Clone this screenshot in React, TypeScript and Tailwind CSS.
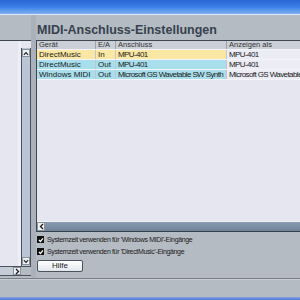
import React from "react";

const font = { fontFamily: '"Liberation Sans", Arial, sans-serif' };

function UpArrow() {
  return (
    <svg width="7" height="5" viewBox="0 0 7 5">
      <path d="M1 4 L3.5 1.5 L6 4" stroke="#1a1a1a" strokeWidth="1.3" fill="none" />
    </svg>
  );
}
function DownArrow() {
  return (
    <svg width="7" height="5" viewBox="0 0 7 5">
      <path d="M1 1 L3.5 3.5 L6 1" stroke="#1a1a1a" strokeWidth="1.3" fill="none" />
    </svg>
  );
}
function RightArrow() {
  return (
    <svg width="5" height="7" viewBox="0 0 5 7">
      <path d="M1 1 L3.5 3.5 L1 6" stroke="#1a1a1a" strokeWidth="1.3" fill="none" />
    </svg>
  );
}
function LeftArrow() {
  return (
    <svg width="5" height="7" viewBox="0 0 5 7">
      <path d="M4 1 L1.5 3.5 L4 6" stroke="#1a1a1a" strokeWidth="1.3" fill="none" />
    </svg>
  );
}

function Check() {
  return (
    <div className="w-[7px] h-[7px] bg-[#111] flex items-center justify-center shrink-0">
      <svg width="6" height="6" viewBox="0 0 6 6">
        <path d="M1 3 L2.4 4.5 L5 1.3" stroke="#fff" strokeWidth="1.2" fill="none" />
      </svg>
    </div>
  );
}

const rows = [
  { g: "DirectMusic", ea: "In", a: "MPU-401", z: "MPU-401", bg: "bg-[#fbe7a4]" },
  { g: "DirectMusic", ea: "Out", a: "MPU-401", z: "MPU-401", bg: "bg-[#a9dfec]" },
  { g: "Windows MIDI", ea: "Out", a: "Microsoft GS Wavetable SW Synth", z: "Microsoft GS Wavetable SW Synth", bg: "bg-[#a9dfec]" },
];

export default function App() {
  return (
    <div className="w-[300px] h-[300px] overflow-hidden bg-[#b5bbc3] flex flex-col text-[#1a1a1a]" style={font}>
      {/* title bar */}
      <div className="h-[14px] shrink-0 bg-gradient-to-b from-[#2a66d6] via-[#3a80e6] to-[#7fb0f2]" />
      <div className="h-[1px] shrink-0 bg-[#dfe8f4]" />

      {/* main */}
      <div className="h-[263px] shrink-0 flex">
        {/* left panel */}
        <div className="w-[31px] shrink-0 pt-[25px] flex flex-col">
          <div className="h-[236px] flex flex-col border-t border-[#3e4650]">
            <div className="flex-1 flex">
              <div className="w-[21px] bg-[#e6e6f0] border-r-[3px] border-[#eeeef6]" />
              <div className="w-[10px] flex flex-col">
                <div className="h-[7px] bg-[#e6e6f0]" />
                <div className="flex-1 flex flex-col bg-[#bac6d6] border-x border-[#4a525c]">
                  <div className="h-[8px] mt-[1px] bg-[#eef0f4] border border-[#8a929c] flex items-center justify-center">
                    <UpArrow />
                  </div>
                  <div className="flex-1" />
                  <div className="h-[8px] mb-[1px] bg-[#eef0f4] border border-[#8a929c] flex items-center justify-center">
                    <DownArrow />
                  </div>
                </div>
              </div>
            </div>
            <div className="h-[10px] shrink-0 flex border-y border-[#4a525c]">
              <div className="w-[21px] bg-[#c4ccd8] flex justify-end">
                <div className="w-[8px] h-full bg-[#eef0f4] border border-[#8a929c] flex items-center justify-center">
                  <RightArrow />
                </div>
              </div>
              <div className="w-[10px] bg-[#b5bbc3]" />
            </div>
          </div>
        </div>

        {/* splitter */}
        <div className="w-[5px] shrink-0 bg-[#aab1ba]" />

        {/* right panel */}
        <div className="flex-1 min-w-0 flex flex-col">
          <div className="h-[25px] shrink-0 flex items-end pb-[4px] pl-[1px]">
            <span className="text-[12.5px] font-bold leading-none text-[#36424e] whitespace-nowrap">
              MIDI-Anschluss-Einstellungen
            </span>
          </div>
          <div className="h-[192px] shrink-0 border-t border-l border-[#3e4650] flex flex-col">
            <div className="flex-1 bg-[#e6e6f0] flex flex-col overflow-hidden">
              {/* header */}
              <div className="h-[8px] flex bg-[#cbd0d8] text-[7.5px] leading-[8px] text-[#333] whitespace-nowrap">
                <div className="w-[59px] pl-[2px] border-r border-[#9aa3ae]">Gerät</div>
                <div className="w-[20px] pl-[2px] border-r border-[#9aa3ae]">E/A</div>
                <div className="w-[111px] pl-[2px] border-r border-[#9aa3ae]">Anschluss</div>
                <div className="flex-1 pl-[2px]">Anzeigen als</div>
              </div>
              {rows.map((r, i) => (
                <div key={i} className="h-[10px] flex border-t border-[#f4f4fa] text-[8px] leading-[9px] whitespace-nowrap">
                  <div className={`w-[59px] pl-[2px] border-r border-[#c0c6cf] ${r.bg}`}>{r.g}</div>
                  <div className={`w-[20px] pl-[2px] border-r border-[#c0c6cf] ${r.bg}`}>{r.ea}</div>
                  <div className={`w-[111px] pl-[2px] border-r border-[#c0c6cf] overflow-hidden tracking-[-0.6px] ${r.bg}`}>{r.a}</div>
                  <div className="flex-1 pl-[2px] overflow-hidden tracking-[-0.6px] bg-[#ececf4]">{r.z}</div>
                </div>
              ))}
              <div className="border-t border-[#f4f4fa]" />
            </div>
            <div className="h-[1px] bg-[#f0f2f6]" />
            <div className="h-[10px] shrink-0 flex bg-gradient-to-b from-[#8a9cb2] to-[#6f8298] border-b border-[#34404c]">
              <div className="w-[8px] bg-[#eef0f4] border border-[#8a929c] flex items-center justify-center">
                <LeftArrow />
              </div>
            </div>
          </div>

          <div className="flex flex-col pl-[1px] pt-[4px] gap-[5px] text-[7px] leading-[7px] tracking-[-0.35px] whitespace-nowrap">
            <div className="flex items-center gap-[3px] h-[7px]">
              <Check />
              <span>Systemzeit verwenden für 'Windows MIDI'-Eingänge</span>
            </div>
            <div className="flex items-center gap-[3px] h-[7px]">
              <Check />
              <span>Systemzeit verwenden für 'DirectMusic'-Eingänge</span>
            </div>
          </div>
          <div className="pt-[5px] pl-[1px]">
            <div className="w-[46px] h-[12px] rounded-[2px] border border-[#4a525c] bg-gradient-to-b from-[#ffffff] to-[#e2e6ec] flex items-center justify-center text-[8px] leading-none">
              Hilfe
            </div>
          </div>
        </div>
      </div>

      {/* bottom */}
      <div className="h-[1px] shrink-0 bg-[#7a8088]" />
      <div className="h-[1px] shrink-0 bg-[#c8cdd4]" />
      <div className="flex-1 bg-[#b5bbc3]" />
      <div className="h-[3px] shrink-0 bg-gradient-to-b from-[#8aa8e4] to-[#4a74cc]" />
    </div>
  );
}
